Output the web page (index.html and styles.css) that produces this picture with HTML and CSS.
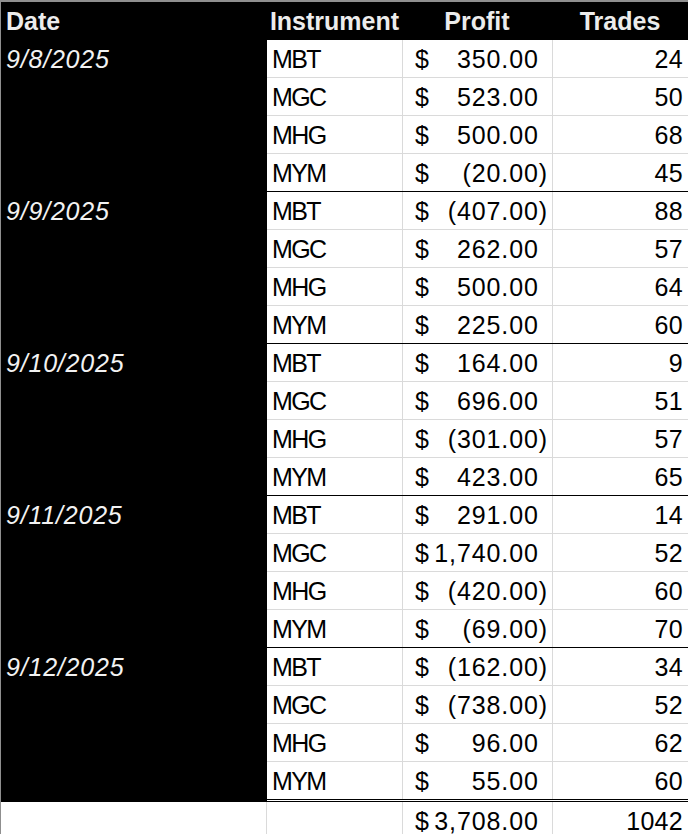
FILE: index.html
```html
<!DOCTYPE html>
<html>
<head>
<meta charset="utf-8">
<link rel="stylesheet" href="styles.css">
</head>
<body>
<div class="sheet">
  <div class="head">
    <div class="h-date">Date</div>
    <div class="h-inst">Instrument</div>
    <div class="h-profit">Profit</div>
    <div class="h-trades">Trades</div>
  </div>

  <div class="group">
    <div class="date">9/8/2025</div>
    <div class="rows">
      <div class="row"><div class="inst">MBT</div><div class="profit"><span class="cur">$</span><span class="amt">350.00<span class="pad">)</span></span></div><div class="trades">24</div></div>
      <div class="row"><div class="inst">MGC</div><div class="profit"><span class="cur">$</span><span class="amt">523.00<span class="pad">)</span></span></div><div class="trades">50</div></div>
      <div class="row"><div class="inst">MHG</div><div class="profit"><span class="cur">$</span><span class="amt">500.00<span class="pad">)</span></span></div><div class="trades">68</div></div>
      <div class="row"><div class="inst">MYM</div><div class="profit"><span class="cur">$</span><span class="amt">(20.00)</span></div><div class="trades">45</div></div>
    </div>
  </div>

  <div class="group">
    <div class="date">9/9/2025</div>
    <div class="rows">
      <div class="row"><div class="inst">MBT</div><div class="profit"><span class="cur">$</span><span class="amt">(407.00)</span></div><div class="trades">88</div></div>
      <div class="row"><div class="inst">MGC</div><div class="profit"><span class="cur">$</span><span class="amt">262.00<span class="pad">)</span></span></div><div class="trades">57</div></div>
      <div class="row"><div class="inst">MHG</div><div class="profit"><span class="cur">$</span><span class="amt">500.00<span class="pad">)</span></span></div><div class="trades">64</div></div>
      <div class="row"><div class="inst">MYM</div><div class="profit"><span class="cur">$</span><span class="amt">225.00<span class="pad">)</span></span></div><div class="trades">60</div></div>
    </div>
  </div>

  <div class="group">
    <div class="date">9/10/2025</div>
    <div class="rows">
      <div class="row"><div class="inst">MBT</div><div class="profit"><span class="cur">$</span><span class="amt">164.00<span class="pad">)</span></span></div><div class="trades">9</div></div>
      <div class="row"><div class="inst">MGC</div><div class="profit"><span class="cur">$</span><span class="amt">696.00<span class="pad">)</span></span></div><div class="trades">51</div></div>
      <div class="row"><div class="inst">MHG</div><div class="profit"><span class="cur">$</span><span class="amt">(301.00)</span></div><div class="trades">57</div></div>
      <div class="row"><div class="inst">MYM</div><div class="profit"><span class="cur">$</span><span class="amt">423.00<span class="pad">)</span></span></div><div class="trades">65</div></div>
    </div>
  </div>

  <div class="group">
    <div class="date">9/11/2025</div>
    <div class="rows">
      <div class="row"><div class="inst">MBT</div><div class="profit"><span class="cur">$</span><span class="amt">291.00<span class="pad">)</span></span></div><div class="trades">14</div></div>
      <div class="row"><div class="inst">MGC</div><div class="profit"><span class="cur">$</span><span class="amt">1,740.00<span class="pad">)</span></span></div><div class="trades">52</div></div>
      <div class="row"><div class="inst">MHG</div><div class="profit"><span class="cur">$</span><span class="amt">(420.00)</span></div><div class="trades">60</div></div>
      <div class="row"><div class="inst">MYM</div><div class="profit"><span class="cur">$</span><span class="amt">(69.00)</span></div><div class="trades">70</div></div>
    </div>
  </div>

  <div class="group last">
    <div class="date">9/12/2025</div>
    <div class="rows">
      <div class="row"><div class="inst">MBT</div><div class="profit"><span class="cur">$</span><span class="amt">(162.00)</span></div><div class="trades">34</div></div>
      <div class="row"><div class="inst">MGC</div><div class="profit"><span class="cur">$</span><span class="amt">(738.00)</span></div><div class="trades">52</div></div>
      <div class="row"><div class="inst">MHG</div><div class="profit"><span class="cur">$</span><span class="amt">96.00<span class="pad">)</span></span></div><div class="trades">62</div></div>
      <div class="row"><div class="inst">MYM</div><div class="profit"><span class="cur">$</span><span class="amt">55.00<span class="pad">)</span></span></div><div class="trades">60</div></div>
    </div>
  </div>

  <div class="total">
    <div class="t-date"></div>
    <div class="inst"></div>
    <div class="profit"><span class="cur">$</span><span class="amt tight">3,708.00<span class="pad">)</span></span></div>
    <div class="trades">1042</div>
  </div>
</div>
</body>
</html>
```
FILE: styles.css
```css
* { box-sizing: border-box; }
html, body { margin: 0; padding: 0; background: #fff; }
body { overflow: hidden; height: 834px; }

.sheet {
  width: 688px;
  font-family: "Liberation Sans", Arial, sans-serif;
  font-size: 25px;
  color: #000;
}

.head {
  display: flex;
  height: 40px;
  background: #000;
  border-top: 2px solid #8f8f8f;
  border-left: 1px solid #8f8f8f;
  color: #ececec;
  font-weight: bold;
  line-height: 38px;
}
.h-date { width: 266px; padding-left: 5px; }
.h-inst { width: 135px; text-align: center; }
.h-profit { width: 150px; text-align: center; }
.h-trades { width: 136px; text-align: center; }

.group { display: flex; }
.date {
  width: 267px;
  background: #000;
  border-left: 1px solid #8f8f8f;
  color: #f2f2f2;
  font-style: italic;
  line-height: 38px;
  padding-left: 5px;
  letter-spacing: 0.8px;
}
.rows { flex: 1; display: flex; flex-direction: column; }
.row {
  display: flex;
  height: 38px;
  line-height: 38px;
  border-bottom: 1px solid #dadada;
}
.row:last-child { border-bottom: 1px solid #000; }
.group.last .row:last-child { height: 40px; border-bottom: 3px double #000; }

.inst {
  width: 135px;
  padding-left: 5px;
  letter-spacing: -1.6px;
}
.profit {
  width: 150px;
  border-left: 1px solid #dadada;
  display: flex;
  justify-content: space-between;
  padding-left: 12px;
  padding-right: 4px;
  letter-spacing: 0.9px;
}
.pad { visibility: hidden; }
.trades {
  width: 136px;
  border-left: 1px solid #dadada;
  text-align: right;
  padding-right: 5px;
  letter-spacing: 0.3px;
}

.total {
  display: flex;
  height: 38px;
  line-height: 38px;
}
.t-date {
  width: 267px;
  border-left: 1px solid #8f8f8f;
  border-right: 1px solid #dadada;
}
.total .inst { width: 135px; }
```
